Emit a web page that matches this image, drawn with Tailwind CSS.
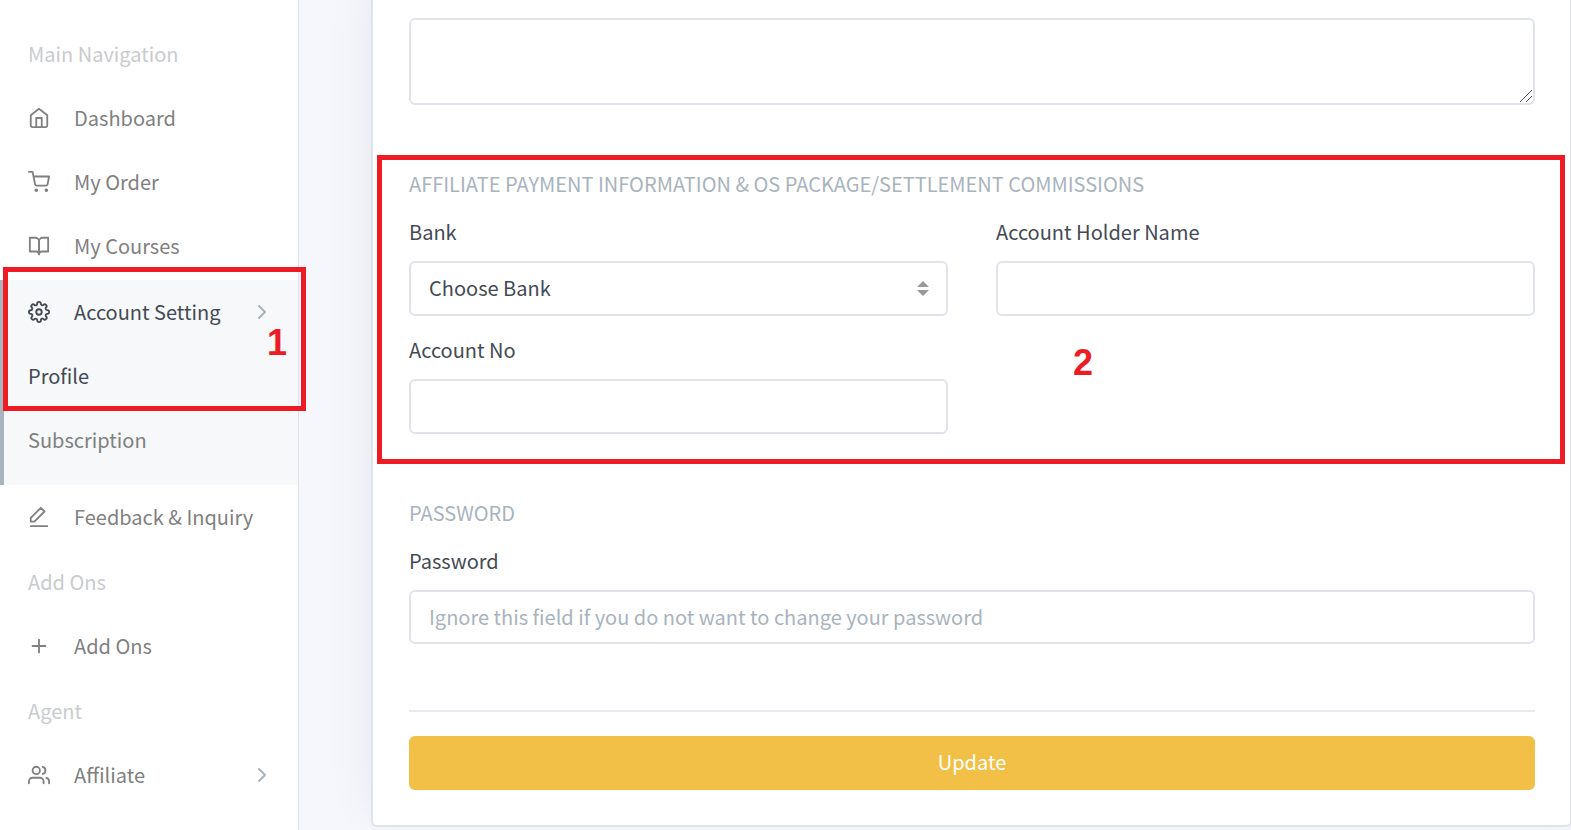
<!DOCTYPE html>
<html lang="en">

<head>
    <meta charset="UTF-8">
    <meta name="viewport" content="width=device-width, initial-scale=1.0">
    <title>Account Setting - Profile</title>
    <script src="https://cdn.jsdelivr.net/npm/@tailwindcss/browser@4"></script>
    <style>
        body {
            font-family: 'Noto Sans CJK SC', 'Open Sans', sans-serif;
        }

        .nav-link:hover {
            color: #363642;
        }
    </style>
</head>

<body class="bg-[#f5f7fc] text-[20px] leading-[34px] text-[#444a53] flex min-h-screen overflow-x-hidden">

    <!-- Sidebar -->
    <aside class="w-[299px] shrink-0 bg-white border-r border-[#e0e4ea] pt-[21px] relative z-10">
        <nav class="text-[#808080]">
            <ul>
                <li class="h-[65px] px-7 flex items-center text-[#c9cbce]">Main Navigation</li>
                <li><a href="#" class="nav-link h-16 px-7 flex items-center gap-6">
                        <svg class="size-[22px]" viewBox="0 0 24 24" fill="none" stroke="currentColor" stroke-width="2" stroke-linecap="round" stroke-linejoin="round">
                            <path d="M3 9l9-7 9 7v11a2 2 0 0 1-2 2H5a2 2 0 0 1-2-2z" />
                            <path d="M9 22V12h6v10" />
                        </svg>
                        <span>Dashboard</span></a></li>
                <li><a href="#" class="nav-link h-16 px-7 flex items-center gap-6">
                        <svg class="size-[22px]" viewBox="0 0 24 24" fill="none" stroke="currentColor" stroke-width="2" stroke-linecap="round" stroke-linejoin="round">
                            <circle cx="9" cy="21" r="1" />
                            <circle cx="20" cy="21" r="1" />
                            <path d="M1 1h4l2.68 13.39a2 2 0 0 0 2 1.61h9.72a2 2 0 0 0 2-1.61L23 6H6" />
                        </svg>
                        <span>My Order</span></a></li>
                <li><a href="#" class="nav-link h-16 px-7 flex items-center gap-6">
                        <svg class="size-[22px]" viewBox="0 0 24 24" fill="none" stroke="currentColor" stroke-width="2" stroke-linecap="round" stroke-linejoin="round">
                            <path d="M2 3h6a4 4 0 0 1 4 4v14a3 3 0 0 0-3-3H2z" />
                            <path d="M22 3h-6a4 4 0 0 0-4 4v14a3 3 0 0 1 3-3h7z" />
                        </svg>
                        <span>My Courses</span></a></li>

                <!-- Active menu -->
                <li class="relative mt-0.5 pb-[13px] bg-[#f6f8fa] border-l-4 border-[#a9b3bd]">
                    <a href="#" class="h-16 pl-6 pr-6 flex items-center gap-6 text-[#444a53]">
                        <svg class="size-[22px]" viewBox="0 0 24 24" fill="none" stroke="currentColor" stroke-width="2" stroke-linecap="round" stroke-linejoin="round">
                            <circle cx="12" cy="12" r="3" />
                            <path d="M19.4 15a1.65 1.65 0 0 0 .33 1.82l.06.06a2 2 0 0 1-2.83 2.83l-.06-.06a1.65 1.65 0 0 0-1.82-.33 1.65 1.65 0 0 0-1 1.51V21a2 2 0 0 1-4 0v-.09A1.65 1.65 0 0 0 9 19.4a1.65 1.65 0 0 0-1.82.33l-.06.06a2 2 0 0 1-2.83-2.83l.06-.06a1.65 1.65 0 0 0 .33-1.82 1.65 1.65 0 0 0-1.51-1H3a2 2 0 0 1 0-4h.09A1.65 1.65 0 0 0 4.6 9a1.65 1.65 0 0 0-.33-1.82l-.06-.06a2 2 0 0 1 2.83-2.83l.06.06a1.65 1.65 0 0 0 1.82.33H9a1.65 1.65 0 0 0 1-1.51V3a2 2 0 0 1 4 0v.09a1.65 1.65 0 0 0 1 1.51 1.65 1.65 0 0 0 1.82-.33l.06-.06a2 2 0 0 1 2.83 2.83l-.06.06a1.65 1.65 0 0 0-.33 1.82V9a1.65 1.65 0 0 0 1.51 1H21a2 2 0 0 1 0 4h-.09a1.65 1.65 0 0 0-1.51 1z" />
                        </svg>
                        <span class="flex-1 whitespace-nowrap">Account Setting</span>
                        <svg class="size-6 shrink-0 text-[#a9b3bd]" viewBox="0 0 24 24" fill="none" stroke="currentColor" stroke-width="2" stroke-linecap="round" stroke-linejoin="round">
                            <path d="M9 18l6-6-6-6" />
                        </svg>
                    </a>
                    <ul>
                        <li><a href="#" class="h-16 px-6 flex items-center text-[#444a53]">Profile</a></li>
                        <li><a href="#" class="nav-link h-16 px-6 flex items-center">Subscription</a></li>
                    </ul>
                    <!-- Step 1 -->
                    <div class="absolute -top-[13px] -left-px -right-[8px] h-36 border-5 border-[#ed1c24] pointer-events-none">
                        <span class="absolute right-[14px] top-12 text-[36px] leading-[46px] font-bold text-[#ed1c24] font-['Liberation_Sans',sans-serif]">1</span>
                    </div>
                </li>

                <li><a href="#" class="nav-link h-16 px-7 flex items-center gap-6">
                        <svg class="size-[22px]" viewBox="0 0 24 24" fill="none" stroke="currentColor" stroke-width="2" stroke-linecap="round" stroke-linejoin="round">
                            <path d="M14 2l4 4L7 17H3v-4L14 2z" />
                            <path d="M3 22h18" />
                        </svg>
                        <span>Feedback &amp; Inquiry</span></a></li>
                <li class="h-[65px] px-7 flex items-center text-[#c9cbce]">Add Ons</li>
                <li><a href="#" class="nav-link h-16 px-7 flex items-center gap-6">
                        <svg class="size-[22px]" viewBox="0 0 24 24" fill="none" stroke="currentColor" stroke-width="2" stroke-linecap="round" stroke-linejoin="round">
                            <path d="M12 5v14M5 12h14" />
                        </svg>
                        <span>Add Ons</span></a></li>
                <li class="h-[65px] px-7 flex items-center text-[#c9cbce]">Agent</li>
                <li><a href="#" class="nav-link h-16 pl-7 pr-6 flex items-center gap-6">
                        <svg class="size-[22px]" viewBox="0 0 24 24" fill="none" stroke="currentColor" stroke-width="2" stroke-linecap="round" stroke-linejoin="round">
                            <path d="M17 21v-2a4 4 0 0 0-4-4H5a4 4 0 0 0-4 4v2" />
                            <circle cx="9" cy="7" r="4" />
                            <path d="M23 21v-2a4 4 0 0 0-3-3.87M16 3.13a4 4 0 0 1 0 7.75" />
                        </svg>
                        <span class="flex-1">Affiliate</span>
                        <svg class="size-6 shrink-0 text-[#a9b3bd]" viewBox="0 0 24 24" fill="none" stroke="currentColor" stroke-width="2" stroke-linecap="round" stroke-linejoin="round">
                            <path d="M9 18l6-6-6-6" />
                        </svg>
                    </a></li>
            </ul>
        </nav>
    </aside>

    <main class="flex-1 min-w-0 pl-[72px] pb-[3px]">
        <form class="-mr-px bg-white border-2 border-t-0 border-[#e0e4ea] rounded-b-md shadow-[0_-16px_48px_rgba(20,20,31,0.07)] pl-9 pr-[35px] pt-[18px] pb-[35px]">
            <div class="relative">
                <textarea aria-label="Address" class="block w-full h-[87px] px-[18px] py-2 bg-white border-2 border-[#e0e4ea] rounded-md resize-y"></textarea>
                <svg class="absolute right-[3px] bottom-[3px] size-3 bg-white pointer-events-none" viewBox="0 0 12 12" stroke="#555555" stroke-width="1">
                    <path d="M0 12L12 0M6 12l6-6" />
                </svg>
            </div>

            <section class="relative mt-[62px]">
                <h2 class="text-[#a9b3bd] mb-[14px]">AFFILIATE PAYMENT INFORMATION &amp; OS PACKAGE/SETTLEMENT COMMISSIONS</h2>
                <div class="grid grid-cols-2 gap-x-12 gap-y-[17px]">
                    <div>
                        <label for="bank" class="block mb-3">Bank</label>
                        <div class="relative">
                            <select id="bank" class="block w-full h-[55px] px-[18px] pb-0.5 bg-white border-2 border-[#e0e4ea] rounded-md appearance-none">
                                <option>Choose Bank</option>
                            </select>
                            <svg class="absolute right-[19px] top-5 w-3 h-[15px] pointer-events-none" viewBox="0 0 12 15" fill="#999999">
                                <path d="M6 0l6 6H0zM6 15L0 9h12z" />
                            </svg>
                        </div>
                    </div>
                    <div>
                        <label for="holder" class="block mb-3">Account Holder Name</label>
                        <input id="holder" type="text" class="block w-full h-[55px] px-[18px] bg-white border-2 border-[#e0e4ea] rounded-md">
                    </div>
                    <div>
                        <label for="account-no" class="block mb-3">Account No</label>
                        <input id="account-no" type="text" class="block w-full h-[55px] px-[18px] bg-white border-2 border-[#e0e4ea] rounded-md">
                    </div>
                </div>
                <!-- Step 2 -->
                <div class="absolute -top-3 -bottom-[30px] -left-8 -right-[30px] border-5 border-[#ed1c24] pointer-events-none">
                    <span class="absolute left-[691px] top-[180px] text-[36px] leading-[46px] font-bold text-[#ed1c24] font-['Liberation_Sans',sans-serif]">2</span>
                </div>
            </section>

            <section class="mt-[62px]">
                <h2 class="text-[#a9b3bd] mb-[14px]">PASSWORD</h2>
                <label for="password" class="block mb-3">Password</label>
                <input id="password" type="password" placeholder="Ignore this field if you do not want to change your password" class="block w-full h-[54px] px-[18px] pb-0.5 bg-white border-2 border-[#e0e4ea] rounded-md placeholder:text-[#a9b3bd]">
            </section>

            <hr class="mt-[66px] mb-6 border-t-2 border-[#e7eaef]">
            <button type="submit" class="block w-full h-[54px] pb-0.5 bg-[#f2c046] text-white rounded-md">Update</button>
        </form>
    </main>

</body>

</html>
